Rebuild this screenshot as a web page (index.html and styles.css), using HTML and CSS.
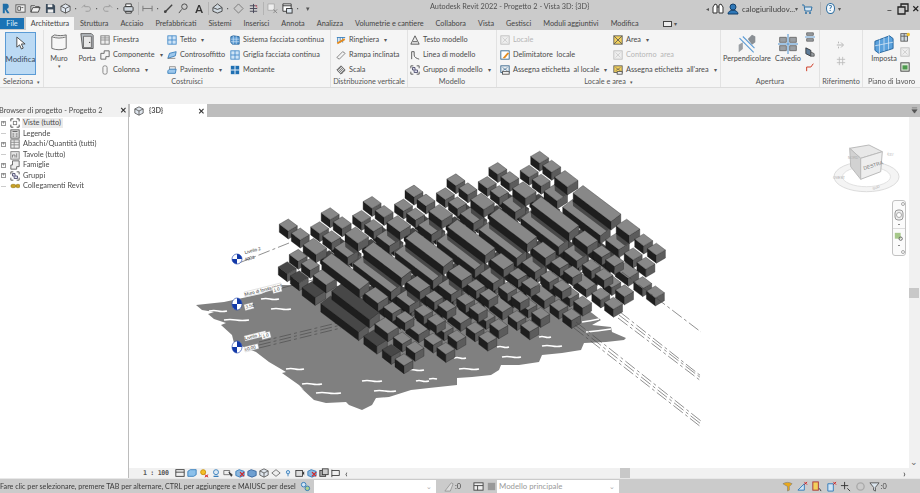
FILE: index.html
```html
<!DOCTYPE html>
<html lang="it">
<head>
<meta charset="utf-8">
<title>Autodesk Revit 2022</title>
<link rel="stylesheet" href="styles.css">
</head>
<body>
<svg class="defs" width="0" height="0">
  <defs>
    <symbol id="i-grid" viewBox="0 0 12 12"><rect x="1" y="1" width="10" height="10" fill="#eee" stroke="#777"/><path d="M1 6h10M6 1v10M1 3.500h10" stroke="#888" fill="none"/></symbol>
    <symbol id="i-comp" viewBox="0 0 12 12"><path d="M1 4h4V1h6v7H7v3H1z" fill="#f4f4f4" stroke="#555"/></symbol>
    <symbol id="i-col" viewBox="0 0 12 12"><rect x="3.500" y="1" width="5" height="10" rx="2" fill="#f4f4f4" stroke="#777"/></symbol>
    <symbol id="i-blue" viewBox="0 0 12 12"><rect x="1" y="1" width="10" height="10" fill="#cfe4f6" stroke="#3d85c6"/><path d="M1 6h10M6 1v10" stroke="#3d85c6"/></symbol>
    <symbol id="i-ceil" viewBox="0 0 12 12"><path d="M1 10 3 4l8-2-1 5z" fill="#9cc7ec" stroke="#2f78b8"/><path d="M1 10h9" stroke="#777"/></symbol>
    <symbol id="i-floor" viewBox="0 0 12 12"><path d="M3 2h7v4H3z" fill="#eee" stroke="#888"/><path d="M1 7 3 5h8l-1 5H1z" fill="#9cc7ec" stroke="#2f78b8"/></symbol>
    <symbol id="i-curtain" viewBox="0 0 12 12"><path d="M1 2 4 1l7 1v9H3L1 9z" fill="#5b9bd5" stroke="#1f5f99"/><path d="M4 1v10M7.500 1.500V11M1 5h10M1 8h10" stroke="#d7e8f7" stroke-width=".7"/></symbol>
    <symbol id="i-mullion" viewBox="0 0 12 12"><rect x="1" y="1" width="10" height="10" fill="#1f6fb2"/><path d="M1 6h10M6 1v10" stroke="#e8f1f9" stroke-width="1.200"/></symbol>
    <symbol id="i-rail" viewBox="0 0 12 12"><path d="M1 3h10M2 3v6M5 3v6M8 3v6" stroke="#2f78b8" fill="none"/><path d="M1 9l9-5 1 2-9 5z" fill="#e58b1e"/></symbol>
    <symbol id="i-ramp" viewBox="0 0 12 12"><path d="M1 9 8 2l3 2-7 7z" fill="#f4f4f4" stroke="#777"/></symbol>
    <symbol id="i-stair" viewBox="0 0 12 12"><path d="M6 1l5 5-5 5-5-5z" fill="#ddd" stroke="#444"/><path d="M3.500 3.500l5 5M5 2.500l5 5M2.500 5l5 5" stroke="#444" stroke-width=".7"/></symbol>
    <symbol id="i-mtext" viewBox="0 0 12 12"><path d="M1 11 6 1l5 10zM3.500 8h5" fill="#eee" stroke="#444"/></symbol>
    <symbol id="i-mline" viewBox="0 0 12 12"><path d="M2 11V2h3v4c0 3 3 4 6 5" fill="none" stroke="#444"/></symbol>
    <symbol id="i-group" viewBox="0 0 12 12"><path d="M1 1h3M8 1h3v3M11 8v3H8M4 11H1V8M1 4V1" fill="none" stroke="#444"/><path d="M3 3h3v3h3v3H5V6H3z" fill="#dde" stroke="#446"/></symbol>
    <symbol id="i-room-off" viewBox="0 0 12 12"><rect x="1" y="1" width="10" height="10" fill="#eee" stroke="#bbb"/><path d="M3 3l6 6M9 3 3 9" stroke="#ccc"/></symbol>
    <symbol id="i-room" viewBox="0 0 12 12"><rect x="1" y="1" width="10" height="10" fill="#fff" stroke="#2b5d85"/><path d="M3 10 9 3l2 1-5 6z" fill="#e58b1e"/></symbol>
    <symbol id="i-roomtag" viewBox="0 0 12 12"><rect x="1" y="1" width="10" height="8" fill="#e9eef2" stroke="#2b5d85"/><path d="M3 3l6 4M9 3 3 7" stroke="#2b5d85" stroke-width=".7"/><rect x="3" y="8" width="8" height="3" fill="#fff" stroke="#444"/></symbol>
    <symbol id="i-area" viewBox="0 0 12 12"><rect x="1" y="1" width="10" height="10" fill="#f2d05c" stroke="#555"/><path d="M1 1l10 10M11 1 1 11" stroke="#555"/></symbol>
    <symbol id="i-areatag" viewBox="0 0 12 12"><rect x="1" y="1" width="10" height="8" fill="#f2d05c" stroke="#555"/><path d="M3 3l6 4M9 3 3 7" stroke="#555" stroke-width=".7"/><rect x="5" y="8" width="6" height="3" fill="#fff" stroke="#444"/></symbol>
    <symbol id="i-cube" viewBox="0 0 12 12"><path d="M6 1l5 2.500v5L6 11 1 8.500v-5z" fill="#dfe6ee" stroke="#555"/><path d="M1 3.500 6 6l5-2.500M6 6v5" fill="none" stroke="#555"/></symbol>
    <symbol id="i-eye" viewBox="0 0 12 12"><circle cx="6" cy="5" r="3" fill="#dce9f5" stroke="#2f78b8"/><path d="M3 10h6" stroke="#2f78b8" stroke-width="1.500"/></symbol>
    <symbol id="i-redx" viewBox="0 0 12 12"><path d="M1 4l4-2 6 2v5l-5 2-5-2z" fill="#8cb7de" stroke="#2f78b8"/><path d="M6 5l5 5M11 5l-5 5" stroke="#d42020" stroke-width="1.400"/></symbol>
    <symbol id="i-sun" viewBox="0 0 12 12"><circle cx="5" cy="5" r="3" fill="#f5bf2a" stroke="#c48a00"/><path d="M7 8l4 3M11 8l-4 3" stroke="#d42020" stroke-width="1.200"/></symbol>
    <symbol id="i-sel" viewBox="0 0 12 12"><path d="M1 3h7v5H1z" fill="#eee" stroke="#666"/><path d="M7 5l3 5 1-2z" fill="#333" stroke="#333"/></symbol>
    <symbol id="i-bino" viewBox="0 0 12 12"><path d="M1 10V4l2-3 2 1v8zM11 10V4L9 1 7 2v8zM5 4h2" fill="#fff" stroke="#333"/></symbol>
  </defs>
</svg>

<div class="app">
  <header class="titlebar">
    <svg class="logo" viewBox="0 0 10 12" width="8" height="11"><path d="M1 0h5c3 0 3.500 6 0 6.500L9.500 12H6.500L3.500 7v5H1z" fill="#1f6ea8"/></svg>
    <div class="qat">
      <svg class="qi" viewBox="0 0 12 12"><rect x="1" y="2" width="10" height="8" fill="#eee" stroke="#555"/><path d="M3 4h3v4H3zM7 5h2" stroke="#555" fill="none"/></svg>
      <svg class="qi" viewBox="0 0 12 12"><path d="M1 10V3h4l1 1h4v2M1 10l2-5h8l-2 5z" fill="#f0f0f0" stroke="#444"/></svg>
      <svg class="qi" viewBox="0 0 12 12"><path d="M1 1h8l2 2v8H1z" fill="#3c4c5c"/><rect x="3" y="1.500" width="5" height="3" fill="#eee"/><rect x="3" y="7" width="6" height="3.500" fill="#eee"/></svg>
      <svg class="qi" viewBox="0 0 12 12"><use href="#i-cube"/></svg><span class="car">▪</span>
      <svg class="qi" viewBox="0 0 12 12"><path d="M1 5l3-3v2h4c3 0 3 5 0 5H5" fill="none" stroke="#999"/></svg><span class="car">▪</span>
      <svg class="qi" viewBox="0 0 12 12"><path d="M11 5 8 2v2H4c-3 0-3 5 0 5h3" fill="none" stroke="#999"/></svg><span class="car">▪</span>
      <svg class="qi" viewBox="0 0 12 12"><path d="M3 1h6v3H3zM3 9h6v2H3z" fill="#fff" stroke="#333"/><rect x="1" y="4" width="10" height="5" rx="1" fill="#cdd5dc" stroke="#333"/></svg>
      <span class="sep"></span>
      <svg class="qi" viewBox="0 0 12 12"><path d="M1 3v6M11 3v6M1 6h10" stroke="#777"/></svg><span class="car">▪</span>
      <svg class="qi" viewBox="0 0 12 12"><path d="M2 10l8-8" stroke="#444" stroke-width="1.500"/><circle cx="2.500" cy="9.500" r="1.500" fill="#444"/></svg>
      <svg class="qi" viewBox="0 0 12 12"><circle cx="7" cy="4" r="3" fill="none" stroke="#444"/><path d="M4 7l-3 4" stroke="#444"/></svg>
      <span class="qa">A</span>
      <span class="sep"></span>
      <svg class="qi" viewBox="0 0 12 12"><path d="M1 5l5-4 5 4v4l-5 2-5-2z" fill="#cfd8df" stroke="#444"/><path d="M1 5l5 2 5-2" stroke="#444" fill="none"/></svg><span class="car">▪</span>
      <svg class="qi" viewBox="0 0 12 12"><path d="M6 1l5 5-5 5-5-5z" fill="none" stroke="#777"/></svg>
      <svg class="qi" viewBox="0 0 12 12"><path d="M6 1v10M2 3h8M2 6h8M2 9h8" stroke="#445" fill="none"/><path d="M8 2l2 3" stroke="#d67" /></svg>
      <span class="sep"></span>
      <svg class="qi" viewBox="0 0 12 12"><path d="M1 1h7v7H1z" fill="#eee" stroke="#aaa"/><path d="M7 7l4 4M11 7l-4 4" stroke="#888"/></svg>
      <svg class="qi" viewBox="0 0 12 12"><path d="M1 1h9v8H1z" fill="#fff" stroke="#333"/><path d="M1 3h9" stroke="#333"/><rect x="5" y="6" width="6" height="5" fill="#dbe5ee" stroke="#333"/></svg><span class="car">▪</span>
      <span class="car qdown">▾</span>
    </div>
    <div class="apptitle">Autodesk Revit 2022 - Progetto 2 - Vista 3D: {3D}</div>
    <div class="account">
      <span class="car">◂</span>
      <svg class="ai" viewBox="0 0 12 12"><use href="#i-bino"/></svg>
      <svg class="ai" viewBox="0 0 12 12"><circle cx="6" cy="4" r="3" fill="#2f78b8" stroke="#123f6a"/><path d="M1 11c0-5 10-5 10 0z" fill="#2f78b8" stroke="#123f6a"/></svg>
      <span class="acct">calogiuriludov...</span><span class="car">▾</span>
      <svg class="ai cart" viewBox="0 0 12 12"><path d="M1 2h2l1 6h6l1-4H4" fill="#d6e6f3" stroke="#2b6ea3"/><circle cx="5" cy="10" r="1" fill="#2b6ea3"/><circle cx="9" cy="10" r="1" fill="#2b6ea3"/></svg>
      <span class="sep"></span>
      <span class="help">?</span><span class="car">▾</span>
      <span class="win">–</span>
      <svg class="ai win-r" viewBox="0 0 12 12"><path d="M1 4h7v7H1zM4 4V1h7v7H8" fill="none" stroke="#222" stroke-width="1.300"/></svg>
      <span class="win close">✕</span>
    </div>
  </header>

  <nav class="tabs">
    <span class="tab file">File</span>
    <span class="tab active">Architettura</span>
    <span class="tab">Struttura</span>
    <span class="tab">Acciaio</span>
    <span class="tab">Prefabbricati</span>
    <span class="tab">Sistemi</span>
    <span class="tab">Inserisci</span>
    <span class="tab">Annota</span>
    <span class="tab">Analizza</span>
    <span class="tab">Volumetrie e cantiere</span>
    <span class="tab">Collabora</span>
    <span class="tab">Vista</span>
    <span class="tab">Gestisci</span>
    <span class="tab">Moduli aggiuntivi</span>
    <span class="tab">Modifica</span>
    <span class="tab minbox"><i class="mini"></i> <b class="car">▾</b></span>
  </nav>

  <section class="ribbon">
    <div class="panel p-sel">
      <div class="pbody">
        <div class="modifica">
          <svg viewBox="0 0 12 16" width="11" height="15"><path d="M2 1v11l3-2.500 2 4.500 2-1-2-4.500h4z" fill="#fff" stroke="#444"/></svg>
          <span>Modifica</span>
        </div>
      </div>
      <div class="ptitle">Seleziona <span class="car">▾</span></div>
    </div>
    <div class="panel p-cos">
      <div class="pbody">
        <div class="large l-muro">
          <svg viewBox="0 0 20 20" width="18" height="18"><path d="M2 3c5 2 11 2 16 0v13c-5 2-11 2-16 0z" fill="#f6f6f6" stroke="#666"/><path d="M2 3 5 1c4 1 9 1 13 0v2" fill="#ddd" stroke="#666"/></svg>
          <span>Muro</span><b class="car">▾</b>
        </div>
        <div class="large l-porta">
          <svg viewBox="0 0 16 20" width="14" height="19"><path d="M1 1h12l2 2v15H3z" fill="#b8bdc2" stroke="#555"/><path d="M4 4h9v13H4z" fill="#e8e8e8" stroke="#666"/><circle cx="11" cy="11" r=".8" fill="#444"/></svg>
          <span>Porta</span>
        </div>
        <div class="col c-a">
          <div class="tool"><svg class="ti"><use href="#i-grid"/></svg>Finestra</div>
          <div class="tool"><svg class="ti"><use href="#i-comp"/></svg>Componente<b class="car">▾</b></div>
          <div class="tool"><svg class="ti"><use href="#i-col"/></svg>Colonna<b class="car">▾</b></div>
        </div>
        <div class="col c-b">
          <div class="tool"><svg class="ti"><use href="#i-blue"/></svg>Tetto<b class="car">▾</b></div>
          <div class="tool"><svg class="ti"><use href="#i-ceil"/></svg>Controsoffitto</div>
          <div class="tool"><svg class="ti"><use href="#i-floor"/></svg>Pavimento<b class="car">▾</b></div>
        </div>
        <div class="col">
          <div class="tool"><svg class="ti"><use href="#i-curtain"/></svg>Sistema facciata continua</div>
          <div class="tool"><svg class="ti"><use href="#i-blue"/></svg>Griglia facciata continua</div>
          <div class="tool"><svg class="ti"><use href="#i-mullion"/></svg>Montante</div>
        </div>
      </div>
      <div class="ptitle">Costruisci</div>
    </div>
    <div class="panel p-dis">
      <div class="pbody">
        <div class="col">
          <div class="tool"><svg class="ti"><use href="#i-rail"/></svg>Ringhiera<b class="car">▾</b></div>
          <div class="tool"><svg class="ti"><use href="#i-ramp"/></svg>Rampa inclinata</div>
          <div class="tool"><svg class="ti"><use href="#i-stair"/></svg>Scala</div>
        </div>
      </div>
      <div class="ptitle">Distribuzione verticale</div>
    </div>
    <div class="panel p-mod">
      <div class="pbody">
        <div class="col">
          <div class="tool"><svg class="ti"><use href="#i-mtext"/></svg>Testo modello</div>
          <div class="tool"><svg class="ti"><use href="#i-mline"/></svg>Linea di modello</div>
          <div class="tool"><svg class="ti"><use href="#i-group"/></svg>Gruppo di modello<b class="car">▾</b></div>
        </div>
      </div>
      <div class="ptitle">Modello</div>
    </div>
    <div class="panel p-loc">
      <div class="pbody">
        <div class="col c-l">
          <div class="tool off"><svg class="ti"><use href="#i-room-off"/></svg>Locale</div>
          <div class="tool"><svg class="ti"><use href="#i-room"/></svg>Delimitatore&nbsp; locale</div>
          <div class="tool"><svg class="ti"><use href="#i-roomtag"/></svg>Assegna etichetta&nbsp; al locale<b class="car">▾</b></div>
        </div>
        <div class="col">
          <div class="tool"><svg class="ti"><use href="#i-area"/></svg>Area<b class="car">▾</b></div>
          <div class="tool off"><svg class="ti"><use href="#i-room-off"/></svg>Contorno&nbsp; area</div>
          <div class="tool"><svg class="ti"><use href="#i-areatag"/></svg>Assegna etichetta&nbsp; all'area<b class="car">▾</b></div>
        </div>
      </div>
      <div class="ptitle">Locale e area <span class="car">▾</span></div>
    </div>
    <div class="panel p-ape">
      <div class="pbody">
        <div class="large l-perp">
          <svg viewBox="0 0 24 24" width="20" height="20"><path d="M13 6l5-5 4 2v7l-4 3z" fill="#8a8f94"/><path d="M2 22V13l5-3v8z" fill="#9a9fa4"/><path d="M3 5l17 17M7 3l14 14" stroke="#5b9bd5" stroke-width="1.300"/></svg>
          <span>Perpendicolare</span>
        </div>
        <div class="large l-cav">
          <svg viewBox="0 0 24 24" width="20" height="20"><path d="M2 4h8v6H2zM14 4h8v6h-8zM2 14h8v6H2zM14 14h8v6h-8z" fill="#9a9fa4" stroke="#666"/><path d="M12 0v24M0 12h24" stroke="#4a90d0" stroke-width="1.200"/></svg>
          <span>Cavedio</span>
        </div>
        <div class="col c-ico">
          <svg class="ti" viewBox="0 0 12 12"><path d="M2 1h8v3H2zM2 8h8v3H2z" fill="#9a9fa4" stroke="#666"/><path d="M0 6h12" stroke="#4a90d0"/></svg>
          <svg class="ti" viewBox="0 0 12 12"><path d="M1 1l6 3v7L1 8z" fill="#5e7c99" stroke="#333"/><path d="M7 6l4 2v3H7z" fill="#9a9fa4" stroke="#555"/></svg>
          <svg class="ti" viewBox="0 0 12 12"><path d="M2 11V6h5l3-4" fill="none" stroke="#d0402a" stroke-width="1.200"/></svg>
        </div>
      </div>
      <div class="ptitle">Apertura</div>
    </div>
    <div class="panel p-rif">
      <div class="pbody pcenter">
        <svg class="ti dim" viewBox="0 0 12 12"><path d="M1 6h7M6 3l3 3-3 3M3 2v2M3 8v2" fill="none" stroke="#aaa"/></svg>
        <svg class="ti dim" viewBox="0 0 12 12"><path d="M1 4h10M1 8h10M4 1v10M8 1v10" stroke="#bbb"/></svg>
      </div>
      <div class="ptitle">Riferimento</div>
    </div>
    <div class="panel p-pia">
      <div class="pbody">
        <div class="large l-imp">
          <svg viewBox="0 0 24 22" width="22" height="20"><path d="M2 8l16-6 4 3v11L6 21l-4-3z" fill="#5aa1dc" stroke="#1f5f99"/><path d="M7 6v15M12 4v15M17 2v15M2 13l20-4" stroke="#dbeaf7" stroke-width=".8"/></svg>
          <span>Imposta</span>
        </div>
        <div class="col c-ico">
          <svg class="ti" viewBox="0 0 12 12"><rect x="1" y="2" width="8" height="9" fill="#cfd8df" stroke="#555"/><path d="M1 5h8M5 2v9" stroke="#555"/><circle cx="10" cy="3" r="2" fill="#f2c230"/></svg>
          <svg class="ti"><use href="#i-room-off"/></svg>
          <svg class="ti" viewBox="0 0 12 12"><rect x="1" y="1" width="10" height="10" fill="#dfeadb" stroke="#333"/><rect x="3" y="4" width="6" height="5" fill="#4c9a4c"/></svg>
        </div>
      </div>
      <div class="ptitle">Piano di lavoro</div>
    </div>
  </section>

  <div class="optbar"></div>

  <main class="work">
    <aside class="browser">
      <div class="btitle"><span>Browser di progetto - Progetto 2</span><b>✕</b></div>
      <ul class="tree">
        <li class="sel"><i class="exp">+</i><svg class="bi" viewBox="0 0 12 12"><path d="M1 4V1h3M8 1h3v3M11 8v3H8M4 11H1V8" fill="none" stroke="#333"/><rect x="4" y="4" width="4" height="4" fill="none" stroke="#777"/></svg><span>Viste (tutto)</span></li>
        <li><i class="noexp"></i><svg class="bi" viewBox="0 0 12 12"><rect x="1" y="1" width="10" height="10" fill="#ddd" stroke="#555"/><path d="M3 3h6M3 6h2M7 6h2M3 8.500h2M7 8.500h2" stroke="#555"/></svg><span>Legende</span></li>
        <li><i class="exp">+</i><svg class="bi" viewBox="0 0 12 12"><rect x="1" y="1" width="10" height="10" fill="#eee" stroke="#666"/><path d="M1 4h10M1 7h10M5 1v10" stroke="#888"/></svg><span>Abachi/Quantità (tutti)</span></li>
        <li><i class="noexp"></i><svg class="bi" viewBox="0 0 12 12"><rect x="1" y="2" width="10" height="9" fill="#e4e4e4" stroke="#777"/><path d="M3 9V6h3v3M8 9V4" stroke="#777" fill="none"/></svg><span>Tavole (tutto)</span></li>
        <li><i class="exp">+</i><svg class="bi" viewBox="0 0 12 12"><path d="M3 1h8v7H8v3H1V6h2z" fill="#eee" stroke="#555"/></svg><span>Famiglie</span></li>
        <li><i class="exp">+</i><svg class="bi" viewBox="0 0 12 12"><use href="#i-group"/></svg><span>Gruppi</span></li>
        <li><i class="noexp"></i><svg class="bi" viewBox="0 0 12 12"><path d="M1 6a2 2 0 0 1 2-2h2a2 2 0 0 1 0 4H3a2 2 0 0 1-2-2zM7 6a2 2 0 0 1 2-2h1a2 2 0 0 1 0 4H9a2 2 0 0 1-2-2z" fill="#c9a227" stroke="#8a6d10" stroke-width=".6"/></svg><span>Collegamenti Revit</span></li>
      </ul>
    </aside>

    <section class="viewwrap">
      <div class="viewtabs">
        <div class="vtab"><svg class="bi" viewBox="0 0 12 12"><use href="#i-cube"/></svg><span>{3D}</span><b>✕</b></div>
        <svg class="vdown" viewBox="0 0 8 8" width="7" height="7"><path d="M1 1h6M1 3h6L4 7z" fill="#555" stroke="#555" stroke-width=".6"/></svg>
      </div>
      <div class="canvasrow">
        <div class="canvas">
          <svg class="scene" viewBox="130 117 780 351" width="780" height="351">
            <g id="ground">
              <path class="shadow" d="M197 305 225 302 262 294 283 285 560 290 593 313 602 320 593 325 612 327 613 332 627 338 625 340 607 342 585 343 582 350 563 353 543 355 540 362 520 365 502 365 500 370 492 375 473 377 458 378 458 385 430 388 412 390 390 397 377 398 373 405 363 410 350 405 347 402 327 403 315 400 302 388 305 390 300 385 283 373 287 372 270 362 257 352 235 343 233 335 222 325 227 323 215 319 209 314 215 312 203 310Z"/>
              <path class="gap" d="M262 299q5-1 9 0t9 0M272 309q5-1 10 0t10 0M210 311q5-1 9 0t9 0M225 320q6-1 12 0t13 0M287 369q5-1 9 0t9 0M303 384q5-1 10 0t10 0M317 393q6-1 12 0t13 0M363 381q5-1 10 0t10 0M375 391q5-1 11 0t11 0M408 370q4-1 8 0t9 0M417 381q3-1 6 0t7 0M430 379q4-1 8 0M460 369q5-1 10 0t10 0M503 357q5-1 10 0t9 0M455 358q3-1 6 0t6 0M498 347q3-1 6 0t6 0M543 346q5-1 10 0t10 0M540 337q3-1 6 0t6 0M583 322q8-1 17-3M587 332q12-1 25-3"/>
            </g>
            <g class="lv-lines">
              <path d="M260 342 342 322M260 345 342 325M260 348 342 328"/>
              <path d="M240 263 290 243"/>
              <path d="M283 288 325 277"/>
            </g>
            <g id="blocks"></g>
            <g class="lv-lines">
              <path d="M623 272 702 332"/>
              <path d="M621 312 702 376M620 315 702 378M619 318 702 381"/>
              <path d="M577 322 702 421M576 325 702 424M575 328 702 427"/>
            </g>
            <g class="levels">
              <circle class="bub" cx="238" cy="259" r="5"/><path class="bubq" d="M238 254a5 5 0 0 1 5 5h-5zM238 259v5a5 5 0 0 1-5-5z"/>
              <text class="lvt" transform="translate(246 254) rotate(-14)">Livello 2</text>
              <text class="lvt" transform="translate(246 261) rotate(-14)">4000</text>

              <ellipse class="bub" cx="238" cy="304" rx="5" ry="6"/><path class="bubq" d="M238 298a5 6 0 0 1 5 6h-5zM238 304v6a5 6 0 0 1-5-6z"/>
              <g transform="translate(246 296) rotate(-14)"><rect class="lbl" x="0" y="-4" width="38" height="5"/><text class="lvt">Muro di fondazione</text></g>
              <g transform="translate(274 292) rotate(-14)"><rect class="lbl" x="0" y="-4.500" width="9" height="6"/><text class="lvt" x="1">1.0</text></g>
              <g transform="translate(246 309) rotate(-14)"><rect class="lbl" x="0" y="-4.500" width="9" height="6"/><text class="lvt" x="1">3.50</text></g>

              <ellipse class="bub" cx="238" cy="347" rx="5" ry="6"/><path class="bubq" d="M238 341a5 6 0 0 1 5 6h-5zM238 347v6a5 6 0 0 1-5-6z"/>
              <g transform="translate(246 340) rotate(-14)"><rect class="lbl" x="0" y="-4" width="22" height="5"/><text class="lvt">Livello 1</text></g>
              <g transform="translate(263 338) rotate(-14)"><rect class="lbl" x="0" y="-4.500" width="9" height="6"/><text class="lvt" x="1">1.0</text></g>
              <g transform="translate(246 351) rotate(-14)"><rect class="lbl" x="0" y="-4" width="14" height="5"/><text class="lvt">±0.00</text></g>
            </g>
          </svg>

          <div class="viewcube">
            <svg viewBox="0 0 70 52" width="70" height="52">
              <ellipse cx="35.500" cy="33.700" rx="32.500" ry="15" fill="#f4f4f4" stroke="#dcdcdc"/>
              <ellipse cx="35.500" cy="33.700" rx="24" ry="10" fill="#fff" stroke="#e2e2e2"/>
              <path d="M18.700 5.300 38 2 51.300 8.700 29.700 15.300z" fill="#e8e8e8" stroke="#bbb"/>
              <path d="M18.700 5.300 29.700 15.300 29.700 36.300 19.700 23.700z" fill="#d2d2d2" stroke="#bbb"/>
              <path d="M29.700 15.300 51.300 8.700 49.700 28.700 29.700 36.300z" fill="#eeeeee" stroke="#bbb"/>
              <text class="vc" transform="translate(33 27) rotate(-17)">DESTRA</text>
              <text class="vc small" transform="translate(2 36)">OVEST</text>
              <text class="vc small" transform="translate(17 16)">NORD</text>
              <text class="vc small" transform="translate(56 12) rotate(10)">EST</text>
              <text class="vc small" transform="translate(42 47) rotate(-20)">SUD</text>
            </svg>
          </div>
          <div class="navbar">
            <i class="dot"></i>
            <svg viewBox="0 0 12 12" width="12" height="12"><rect x="2" y="1" width="8" height="10" rx="3" fill="#eee" stroke="#999"/><circle cx="6" cy="6" r="2.500" fill="#fff" stroke="#aaa"/></svg>
            <span class="ndot"></span>
            <span class="nline"></span>
            <svg viewBox="0 0 12 12" width="10" height="10"><rect x="1" y="1" width="7" height="7" fill="#a6c88a"/><circle cx="8" cy="8" r="2" fill="none" stroke="#555"/></svg>
            <span class="ndot"></span>
            <i class="dot"></i>
          </div>
        </div>
        <div class="vscroll"><span class="vthumb"></span><span class="vdownarrow">⌄</span></div>
      </div>
      <div class="viewbar">
        <span class="scale">1 : 100</span>
        <div class="vicons">
          <svg class="vi" viewBox="0 0 12 12"><rect x="1" y="2" width="10" height="8" fill="#eee" stroke="#333"/><path d="M1 5h10" stroke="#333"/></svg>
          <svg class="vi" viewBox="0 0 12 12"><path d="M1 4l3-2h7v6l-3 2H1z" fill="#8cc0ea" stroke="#2f78b8"/></svg>
          <svg class="vi" viewBox="0 0 12 12"><use href="#i-sun"/></svg>
          <svg class="vi" viewBox="0 0 12 12"><use href="#i-eye"/></svg>
          <svg class="vi" viewBox="0 0 12 12"><use href="#i-sel"/></svg>
          <svg class="vi" viewBox="0 0 12 12"><use href="#i-redx"/></svg>
          <svg class="vi" viewBox="0 0 12 12"><path d="M1 4l4-2 6 2v5l-5 2-5-2z" fill="#6f9fd0" stroke="#2f5f99"/></svg>
          <svg class="vi" viewBox="0 0 12 12"><use href="#i-cube"/></svg>
          <svg class="vi" viewBox="0 0 12 12"><path d="M1 6l5-4 5 4-5 4z" fill="#eee" stroke="#666"/></svg>
          <svg class="vi" viewBox="0 0 12 12"><circle cx="6" cy="5" r="2" fill="#cfe4f6" stroke="#2f78b8"/><path d="M6 7v3" stroke="#2f78b8"/></svg>
          <svg class="vi" viewBox="0 0 12 12"><rect x="1" y="3" width="8" height="7" fill="#ddd" stroke="#333"/><path d="M9 6l2-2v5z" fill="#333"/></svg>
          <svg class="vi" viewBox="0 0 12 12"><use href="#i-redx"/></svg>
          <svg class="vi" viewBox="0 0 12 12"><rect x="1" y="3" width="7" height="7" fill="#aaa" stroke="#333"/><rect x="4" y="1" width="7" height="7" fill="#ccc" stroke="#333"/></svg>
          <svg class="vi" viewBox="0 0 12 12"><path d="M1 2v9M1 3h9v6H1" fill="#eee" stroke="#333"/></svg>
          <span class="vlt">‹</span>
        </div>
        <div class="hscroll"><span class="hthumb"></span></div>
        <span class="hright">›</span>
      </div>
    </section>
  </main>

  <footer class="status">
    <span class="stext">Fare clic per selezionare, premere TAB per alternare, CTRL per aggiungere e MAIUSC per desel</span>
    <svg class="si" viewBox="0 0 12 12"><circle cx="4" cy="4" r="2.500" fill="#cfe4f6" stroke="#2f78b8"/><circle cx="8" cy="8" r="2.500" fill="#a9d08e" stroke="#2f78b8"/></svg>
    <div class="combo c1"><span></span><b>⌄</b></div>
    <svg class="si" viewBox="0 0 12 12"><path d="M2 11 9 2l2 1-3 8z" fill="#ddd" stroke="#999"/></svg>
    <span class="zero">:0</span>
    <svg class="si s-wk" viewBox="0 0 12 12"><rect x="1" y="2" width="10" height="8" fill="#eee" stroke="#444"/><path d="M1 5h10M5 5v5" stroke="#444"/></svg>
    <svg class="si" viewBox="0 0 12 12"><rect x="2" y="2" width="8" height="8" fill="#999"/></svg>
    <div class="combo c2"><span>Modello principale</span><b>⌄</b></div>
    <div class="stools">
      <svg class="si" viewBox="0 0 12 12"><path d="M1 3c3-2 7-2 10 0L8 6v4L6 11V6z" fill="#e9a81c" stroke="#777" stroke-width=".6"/></svg>
      <svg class="si" viewBox="0 0 12 12"><path d="M1 10 8 3v7z" fill="#cfe4f6" stroke="#2f78b8"/><path d="M8 1l3 3M11 1 8 4" stroke="#d42020"/></svg>
      <svg class="si" viewBox="0 0 12 12"><rect x="2" y="1" width="6" height="9" fill="#f2d05c" stroke="#a33"/><path d="M9 8l2 3" stroke="#333"/></svg>
      <svg class="si" viewBox="0 0 12 12"><path d="M2 3h6v8H2z" fill="#cfe4f6" stroke="#2f78b8"/><path d="M8 1l3 3M11 1 8 4" stroke="#d42020"/></svg>
      <svg class="si" viewBox="0 0 12 12"><path d="M5 1v8M1 5h8" stroke="#333"/><path d="M8 8l3 3" stroke="#333"/></svg>
      <svg class="si" viewBox="0 0 12 12"><circle cx="6" cy="6" r="4" fill="none" stroke="#aaa" stroke-width="1.500"/></svg>
      <svg class="si" viewBox="0 0 12 12"><path d="M1 2h10L7 7v4L5 10V7z" fill="#dbe5ee" stroke="#555"/></svg>
      <span class="zero z2">:0</span>
    </div>
  </footer>
</div>
<script src="model.js"></script>
</body>
</html>
```

FILE: styles.css
```css
* { box-sizing: border-box; }
html, body { margin: 0; padding: 0; background: #fff; }
body { width: 920px; height: 493px; overflow: hidden; }
.defs { position: absolute; }
.app {
  width: 920px; height: 493px; display: flex; flex-direction: column; overflow: hidden;
  font-family: Lato, "Open Sans", sans-serif; font-size: 7.300px; color: #4a4a4a;
  filter: blur(0.3px);
}
.car { font-size: 6px; font-weight: normal; color: #555; margin-left: 4px; line-height: 1; }

/* title bar */
.titlebar { height: 17px; background: #cbcbcb; display: flex; align-items: center; position: relative; }
.logo { margin-left: 2px; flex: none; }
.qat { display: flex; align-items: center; margin-left: 5px; }
.qi { width: 11px; height: 11px; margin-right: 4px; flex: none; }
.qat .car { width: 3px; margin: 0 3px 0 0; font-size: 4px; overflow: hidden; }
.qat .qdown { font-size: 7px; width: 6px; margin-left: 3px; }
.qa { font-weight: 700; font-size: 11px; color: #333; width: 12px; margin-right: 3px; text-align: center; }
.qat .sep { margin: 0 3px 0 0; }
.sep { width: 1px; height: 13px; background: #b3b3b3; margin: 0 3px 0 1px; flex: none; }
.apptitle { position: absolute; left: 430px; top: 0; line-height: 13px; font-size: 7.300px; white-space: nowrap; color: #505050; }
.account { position: absolute; left: 706px; top: 1px; width: 214px; display: flex; align-items: center; height: 15px; }
.account .car { margin-left: 0; }
.ai { width: 12px; height: 12px; margin-left: 3px; flex: none; }
.acct { font-size: 7.800px; margin-left: 3px; width: 54px; white-space: nowrap; color: #444; }
.cart { margin: 0 6px 0 3px; }
.help { width: 11px; height: 11px; margin: 0 3px 0 2px; border: 1px solid #2b6ea3; border-radius: 50%; font-size: 8px; font-weight: 700; line-height: 9px; text-align: center; color: #2b6ea3; background: #f4f8fb; }
.win { font-size: 10px; margin-left: 45px; color: #222; width: 10px; text-align: center; line-height: 1; }
.win-r { margin-left: 4px; }
.win.close { margin-left: 3px; font-weight: 700; font-size: 9px; }

/* tabs */
.tabs { height: 13px; background: #cbcbcb; display: flex; align-items: flex-end; }
.tab { height: 12px; line-height: 12px; padding: 0 6px; white-space: nowrap; flex: none; color: #454545; }
.tab.file { width: 24px; height: 11px; margin-bottom: 1px; background: #1b72b5; color: #dcecf8; padding: 0; text-align: center; margin-right: 2px; }
.tab.active { background: #f5f5f5; height: 13px; line-height: 13px; width: 48px; padding: 0; text-align: center; }
.minbox { display: flex; align-items: center; margin-left: 12px; }
.mini { display: block; width: 9px; height: 6px; border: 1px solid #444; background: #eee; }
.minbox .car { margin-left: 2px; }

/* ribbon */
.ribbon { height: 58px; background: #f5f5f5; display: flex; border-bottom: 1px solid #dcdcdc; }
.panel { display: flex; flex-direction: column; border-right: 1px solid #e2e2e2; flex: none; }
.pbody { height: 48px; display: flex; padding-top: 2px; }
.ptitle { height: 9px; line-height: 8px; text-align: center; white-space: nowrap; color: #555; }
.ptitle .car { font-size: 5px; margin-left: 2px; }
.p-sel { width: 44px; }
.p-cos { width: 287px; }
.p-dis { width: 77px; }
.p-mod { width: 89px; }
.p-loc { width: 224px; }
.p-ape { width: 99px; }
.p-rif { width: 43px; }
.p-pia { width: 57px; border-right: 0; }
.p-sel .pbody { padding-top: 0; }
.modifica { width: 31px; height: 43px; margin: 2px 0 0 5px; background: #bcdaf4; border: 1px solid #5b9bd5; display: flex; flex-direction: column; align-items: center; padding-top: 3px; flex: none; }
.modifica span { margin-top: 3px; line-height: 10px; color: #3a4a5a; font-size: 7.800px; }
.modifica svg { margin-left: -1px; }
.large { display: flex; flex-direction: column; align-items: center; text-align: center; flex: none; }
.large span { line-height: 10px; white-space: nowrap; }
.large .car { margin: 0; font-size: 5px; }
.l-muro { width: 24px; margin-left: 3px; padding-top: 2px; }
.l-muro span { margin-top: 2px; }
.l-porta { width: 26px; margin-left: 3px; }
.l-porta span { margin-top: 3px; }
.col { display: flex; flex-direction: column; flex: none; }
.c-a { width: 67px; }
.c-b { width: 63px; }
.tool { height: 15px; display: flex; align-items: center; white-space: nowrap; line-height: 15px; }
.ti { width: 10px; height: 10px; margin-right: 3px; flex: none; }
.tool .car { margin-left: 5px; }
.off { color: #b5b5b5; }
.p-dis .col { margin-left: 5px; }
.p-mod .col { margin-left: 2px; }
.c-l { width: 113px; margin-left: 3px; }
.l-perp { width: 48px; margin-left: 2px; padding-top: 2px; }
.l-cav { width: 30px; margin-left: 2px; padding-top: 2px; }
.c-ico { margin-left: 2px; gap: 5px; }
.pcenter { flex-direction: column; align-items: center; padding-top: 10px; gap: 6px; }
.dim { margin: 0; }
.l-imp { width: 32px; margin-left: 5px; padding-top: 2px; }
.p-pia .c-ico { margin-left: 0; }
.optbar { height: 16px; background: #f1f1f1; flex: none; }

/* workspace */
.work { flex: 1; display: flex; min-height: 0; }
.browser { width: 129px; background: #fff; border-right: 1px solid #bcbcbc; flex: none; overflow: hidden; }
.btitle { height: 13px; line-height: 13px; background: #f1f1f1; display: flex; justify-content: space-between; padding-right: 1px; white-space: nowrap; }
.btitle span { margin-left: -1px; }
.btitle b { color: #333; font-size: 8px; }
.tree { list-style: none; margin: 0; padding: 1px 0 0; font-size: 7.400px; }
.tree li { height: 10.500px; display: flex; align-items: center; line-height: 10px; white-space: nowrap; }
.tree li span { padding: 0 2px 0 1px; margin-left: 2px; }
.tree li.sel span { background: #ebebeb; }
.exp { width: 5px; height: 5px; border: 1px solid #9a9a9a; margin-left: 1px; font-size: 5px; line-height: 3px; font-style: normal; text-align: center; color: #666; flex: none; }
.noexp { width: 5px; height: 1px; margin-left: 1px; background: #ccc; flex: none; }
.bi { width: 10px; height: 10px; margin-left: 4px; flex: none; }

.viewwrap { flex: 1; display: flex; flex-direction: column; min-width: 0; }
.viewtabs { height: 13px; background: #bdbdbd; display: flex; justify-content: space-between; align-items: center; flex: none; padding-right: 2px; }
.vtab { width: 77px; height: 13px; background: #fff; display: flex; align-items: center; margin-left: 1px; }
.vtab span { margin-left: 5px; font-weight: 700; color: #555; flex: 1; }
.vtab b { font-size: 8px; color: #333; margin-right: 2px; }
.vtab .bi { margin-left: 4px; }
.canvasrow { flex: 1; display: flex; min-height: 0; }
.canvas { width: 780px; position: relative; background: #fff; overflow: hidden; flex: none; }
.scene { display: block; }
.vscroll { flex: 1; background: #f1f1f1; position: relative; }
.vthumb { position: absolute; left: 0; top: 171px; width: 10px; height: 10px; background: #c8c8c8; }
.vdownarrow { position: absolute; left: 1px; bottom: 2px; font-size: 9px; line-height: 8px; color: #666; }
.viewbar { height: 10px; background: #f1f1f1; display: flex; align-items: center; flex: none; }
.scale { margin-left: 14px; width: 32px; font-size: 6.600px; font-weight: 700; color: #555; flex: none; font-family: "DejaVu Sans Mono", monospace; letter-spacing: -0.300px; }
.vicons { display: flex; align-items: center; gap: 2px; width: 174px; flex: none; }
.vi { width: 10px; height: 10px; flex: none; }
.vlt { font-size: 10px; line-height: 8px; margin-left: 2px; color: #333; }
.hscroll { width: 556px; height: 10px; flex: none; position: relative; }
.hthumb { position: absolute; left: 271px; top: 0; width: 10px; height: 10px; background: #c8c8c8; }
.hright { font-size: 10px; line-height: 8px; color: #333; margin-left: -2px; }

/* model */
.shadow { fill: #808080; }
.gap { fill: none; stroke: #fff; stroke-width: 1.600px; }
.top { fill: #888; stroke: #222; stroke-width: .35px; stroke-linejoin: round; }
.top.dark { fill: #474747; }
.left { fill: #1e1e1e; stroke: #111; stroke-width: .35px; stroke-linejoin: round; }
.right { fill: #5c5c5c; stroke: #222; stroke-width: .35px; stroke-linejoin: round; }
.band { fill: #484848; }
.lv-lines path { fill: none; stroke: #444; stroke-width: .6px; stroke-dasharray: 12 3 3 3; }
.bub { fill: #fff; stroke: #1239a8; stroke-width: .6px; }
.bubq { fill: #1239a8; }
.lbl { fill: #fff; stroke: #aaa; stroke-width: .3px; }
.lvt { font-size: 4.500px; fill: #333; font-family: "Liberation Sans", sans-serif; }
.vc { font-size: 5px; fill: #777; font-family: "Liberation Sans", sans-serif; }
.vc.small { font-size: 3.500px; fill: #aaa; }

.viewcube { position: absolute; left: 702px; top: 26px; }
.navbar { position: absolute; left: 763px; top: 83px; width: 14px; height: 56px; background: #fbfbfb; border: 1px solid #c2c2c2; border-radius: 3px; display: flex; flex-direction: column; align-items: center; padding-top: 1px; }
.dot { width: 4px; height: 4px; border: 1px solid #aaa; border-radius: 50%; align-self: flex-end; }
.navbar svg { margin-top: 3px; }
.ndot { width: 2px; height: 1px; background: #888; margin-top: 3px; }
.nline { width: 12px; height: 1px; background: #ddd; margin-top: 3px; }
.navbar .dot:last-child { margin-top: auto; margin-bottom: 1px; }

/* status bar */
.status { height: 15px; background: #cbcbcb; display: flex; align-items: center; flex: none; border-top: 1px solid #e8e8e8; overflow: hidden; }
.stext { width: 298px; white-space: nowrap; overflow: hidden; flex: none; color: #3c3c3c; font-size: 7.200px; }
.si { width: 11px; height: 11px; margin-left: 2px; flex: none; }
.combo { height: 13px; background: #fff; display: flex; align-items: center; justify-content: space-between; padding: 0 4px 0 2px; color: #9a9a9a; flex: none; }
.combo b { font-size: 7px; font-weight: normal; color: #aaa; line-height: 6px; }
.c1 { width: 122px; margin-left: 3px; }
.c1 + .si { margin-left: 7px; }
.c2 { width: 122px; font-size: 7.800px; }
.zero { margin-left: 1px; color: #444; }
.s-wk { margin-left: 12px; }
.stools { margin-left: 163px; display: flex; align-items: center; gap: 3.500px; }
.stools .si { margin-left: 0; }
.z2 { margin-left: -3px; }
```

FILE: model.js
```js
// Draws the blocks of the 3D model as isometric boxes on the SVG canvas.
var NS = "http://www.w3.org/2000/svg";
var blocks = document.getElementById("blocks");
var A = [9, 6.8];

function poly(cls, pts) {
  var p = document.createElementNS(NS, "polygon");
  p.setAttribute("class", cls);
  p.setAttribute("points", pts.map(function (q) { return q[0].toFixed(1) + "," + q[1].toFixed(1); }).join(" "));
  blocks.appendChild(p);
}

// Each kind of element in a strip: length along the strip, cross vector, height.
var CUBE = { len: 1, b: [-9, 5.2], h: 8 };
var MID = { len: 1.45, b: [-10.5, 6.5], h: 8 };
var BEAM = { len: 4.2, b: [-9.8, 7.5], h: 8.5 };

function box(x, y, kind, dark, band) {
  var B = kind.b, H = kind.h, len = kind.len;
  var a = [x, y];
  var r = [x + A[0] * len, y + A[1] * len];
  var l = [x + B[0], y + B[1]];
  var f = [r[0] + B[0], r[1] + B[1]];
  var d = function (q) { return [q[0], q[1] + H]; };
  poly("left", [l, f, d(f), d(l)]);
  poly("right", [f, r, d(r), d(f)]);
  poly("top" + (dark ? " dark" : ""), [a, r, f, l]);
  if (band) {
    poly("band", [a, r, [r[0] + B[0] * 0.4, r[1] + B[1] * 0.4], [x + B[0] * 0.4 + A[0] * 0.5, y + B[1] * 0.4 + A[1] * 0.5]]);
  }
}

var KINDS = [CUBE, CUBE, MID, BEAM, MID, CUBE, CUBE];
var STEPS = [[0, 0], [12, 9], [13.3, 10.3], [18, 15], [43.7, 33.7], [17, 14.7], [12.7, 9.3]];

function strip(x, y, opts) {
  opts = opts || {};
  for (var i = 0; i < KINDS.length; i++) {
    x += STEPS[i][0];
    y += STEPS[i][1];
    box(x, y, KINDS[i], opts.dark && opts.dark.indexOf(i) >= 0, opts.band && KINDS[i] !== CUBE);
  }
}

var DX = 41.9, DY = -11.3;
var U0 = [289.3, 219], B0 = [320.7, 221.7];
var k;

// lowest level
for (k = 6; k >= 0; k--) strip(U0[0] - 1 + k * DX, U0[1] + 42.7 + k * DY, { dark: k === 0 ? [0, 1, 2, 3, 4, 5] : [0, 1, 2, 3] });
// middle level
for (k = 5; k >= 0; k--) strip(U0[0] + 10 + k * DX, U0[1] + 30.3 + k * DY, { dark: k === 0 ? [3] : [0, 1, 2, 3] });
// upper level, lower strips carry the shadow of the higher ones
for (k = 5; k >= 0; k--) strip(B0[0] + k * DX, B0[1] + k * DY, { band: true });
// highest level
for (k = 6; k >= 0; k--) strip(U0[0] + k * DX, U0[1] + k * DY);
```
